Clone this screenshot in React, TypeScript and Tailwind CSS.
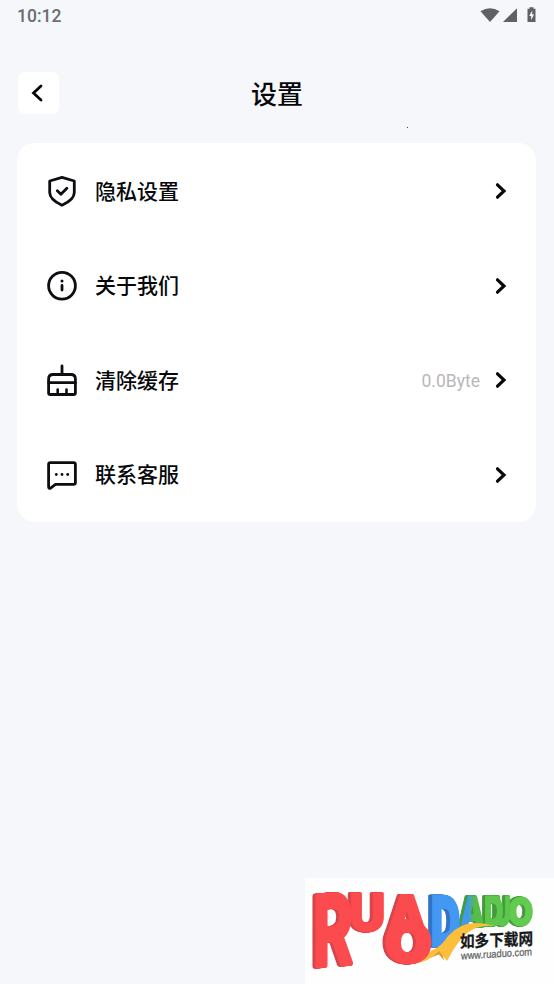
import type { ReactNode } from "react";

interface SettingItem {
  label: string;
  icon: ReactNode;
  value?: string;
}

function ShieldIcon() {
  return (
    <svg className="h-8 w-8" viewBox="0 0 32 32" fill="none" stroke="#0c0e11" strokeWidth={2.8} strokeLinecap="round" strokeLinejoin="round">
      <path d="M16 2.400 28.300 6v11.500c0 5.500-5.400 9.600-12.300 12.800C9.100 27.100 3.700 23 3.700 17.500V6Z" />
      <path d="m11.300 15.800 3.600 3.500 6-6.100" />
    </svg>
  );
}

function InfoIcon() {
  return (
    <svg className="h-8 w-8" viewBox="0 0 32 32" fill="none" stroke="#0c0e11" strokeWidth={2.8} strokeLinecap="round">
      <circle cx="16" cy="15.700" r="13.400" />
      <path d="M16 15.500v4.600" />
      <circle cx="16" cy="11" r="1.500" fill="#0c0e11" stroke="none" />
    </svg>
  );
}

function BroomIcon() {
  return (
    <svg className="h-8 w-8" viewBox="0 0 32 32" fill="none" stroke="#0c0e11" strokeWidth={2.8} strokeLinecap="round" strokeLinejoin="round">
      <path d="M16 2v8" />
      <path d="M2.600 28.700V15q0-4.500 4.500-4.500h17.800q4.500 0 4.500 4.500v13.700q0 1.800-1.800 1.800H4.400q-1.800 0-1.800-1.800Z" />
      <path d="M2.600 18.700h26.800" />
      <path d="M11.700 25.500V30M20.500 25.500V30" strokeWidth={2.600} />
    </svg>
  );
}

function ChatIcon() {
  return (
    <svg className="mt-px h-8 w-8" viewBox="0 0 32 32" fill="none" stroke="#0c0e11" strokeWidth={2.800} strokeLinejoin="round">
      <path d="M4.400 3.600h23.200q1.800 0 1.800 1.800v18.200q0 1.800-1.800 1.800H9.500l-4.600 3.500q-2.300 1.200-2.300-1.200V5.400q0-1.800 1.800-1.800Z" />
      <g fill="#0c0e11" stroke="none">
        <circle cx="10.300" cy="15.500" r="1.400" />
        <circle cx="16" cy="15.500" r="1.400" />
        <circle cx="21.700" cy="15.500" r="1.400" />
      </g>
    </svg>
  );
}

const items: SettingItem[] = [
  { label: "隐私设置", icon: <ShieldIcon /> },
  { label: "关于我们", icon: <InfoIcon /> },
  { label: "清除缓存", icon: <BroomIcon />, value: "0.0Byte" },
  { label: "联系客服", icon: <ChatIcon /> },
];

function StatusBar() {
  return (
    <div className="flex h-8 items-center justify-between pr-[17px] pl-[17px] text-[#6b6d71]">
      <span className="font-[Roboto,sans-serif] text-[17.500px] leading-8 font-medium">10:12</span>
      <svg className="mb-px h-5 w-[57px]" viewBox="0 0 57 20" fill="#5f6165">
        <path d="M.500 5.300Q10 -1 19.500 5.300L10 16Z" />
        <path d="M37 2.200V16H23Z" />
        <path d="M49.500 1.200h4v1.500h2V16h-8V2.700h2Z" />
        <path d="m52.200 4.500-3 5.500h1.900v4l3-5.500h-1.900Z" fill="#f5f6fa" />
      </svg>
    </div>
  );
}

// Left bearing and ink width of the heavy capitals, in em
const METRICS: Record<string, [number, number]> = {
  R: [0.05, 0.61],
  U: [0.05, 0.65],
  A: [0.01, 0.78],
  D: [0.05, 0.64],
  O: [0.04, 0.71],
};
const CAP_HEIGHT = 0.727;

interface LetterProps {
  char: string;
  x: number;
  y: number;
  w: number;
  h: number;
  stroke: number;
  fill: string;
  skew?: number;
  weight?: number;
}

function Letter({ char, x, y, w, h, stroke, fill, skew = 0, weight = 900 }: LetterProps) {
  const [bearing, width] = METRICS[char];
  const sx = (w - stroke) / width / 100;
  const sy = (h - stroke) / CAP_HEIGHT / 100;
  const left = x + stroke / 2 - bearing * sx * 100;
  return (
    <text
      transform={`matrix(${sx} ${skew} 0 ${sy} ${left} ${y + h - stroke / 2})`}
      fill={fill}
      stroke={fill}
      strokeWidth={stroke}
      strokeLinejoin="round"
      fontWeight={weight}
      vectorEffect="non-scaling-stroke"
    >
      {char}
    </text>
  );
}

const RED_SIDE =
  "[filter:drop-shadow(-1px_0_0_#d8454b)_drop-shadow(-1px_0_0_#d8454b)_drop-shadow(-1px_0.5px_0_#d04248)]";
const BLUE_SIDE =
  "[filter:drop-shadow(-1px_0_0_#3273c8)_drop-shadow(-1px_0_0_#3273c8)_drop-shadow(-2px_0.5px_0_#3273c8)]";
const GREEN_SIDE =
  "[filter:drop-shadow(-1px_0_0_#429b3c)_drop-shadow(-1px_0_0_#429b3c)_drop-shadow(-1px_0.5px_0_#429b3c)]";

function Logo() {
  return (
    <svg className="h-[106px] w-[249px]" viewBox="0 0 249 106">
      <defs>
        <linearGradient id="blueGreen">
          <stop offset="0.3" stopColor="#4298ed" />
          <stop offset="0.6" stopColor="#55bd48" />
        </linearGradient>
      </defs>
      <rect width="249" height="106" fill="#fefefe" />
      <g fontFamily="Inter, sans-serif" fontSize={100}>
        <g className={GREEN_SIDE}>
          <Letter char="O" x={204} y={18} w={24} h={30} stroke={1} fill="#62cb50" />
        </g>
        <g className={GREEN_SIDE}>
          <Letter char="U" x={190} y={17} w={16} h={31} stroke={1} fill="#5dc64c" />
        </g>
        <g className={GREEN_SIDE}>
          <Letter char="D" x={180} y={17} w={18} h={31} stroke={1} fill="#5dc64c" />
        </g>
        <g className={GREEN_SIDE}>
          <Letter char="A" x={155} y={17} w={25} h={32} stroke={1} fill="url(#blueGreen)" />
        </g>
        <g className={BLUE_SIDE}>
          <Letter char="D" x={127} y={16.5} w={28} h={52} stroke={2} fill="#4298f3" />
        </g>
      </g>
      <path d="m126 73 10-4 3 13.500-5-6-8 3Z" fill="#dc9d2c" />
      <path d="M98 85.500Q116 83 127 72.500 136 69 143 58q12-13 27-13 10 0 20 3-18-2-29 8-9 8-19 27l-8-10Q120 88 98 85.500Z" fill="#fbbf3c" />
      <g fontFamily="Inter, sans-serif" fontSize={100}>
        <g className={RED_SIDE}>
          <Letter char="U" x={46} y={14.500} w={34} h={39} stroke={1} fill="#fb4b4e" />
        </g>
        <g className={RED_SIDE}>
          <Letter char="R" x={9} y={16.500} w={41} h={74} stroke={4} skew={-0.050} weight={700} fill="#fb4b4e" />
        </g>
        <g className={RED_SIDE}>
          <Letter char="A" x={80.500} y={15.500} w={46} h={45} stroke={4} weight={700} fill="#fb4b4e" />
          <Letter char="O" x={81} y={43} w={46} h={42} stroke={3} fill="#fb4b4e" />
        </g>
      </g>
      <text transform="matrix(1 -.04 0 1 155 69.500)" fill="#171819" stroke="#171819" strokeWidth={0.300} fontFamily="'Noto Sans CJK SC', sans-serif" fontWeight={700} fontSize={16.500} textLength={73} lengthAdjust="spacingAndGlyphs">
        如多下载网
      </text>
      <text transform="matrix(1 -.06 0 1 156 81.500)" fill="#66686a" fontFamily="'Liberation Sans', sans-serif" fontSize={10.500} stroke="#66686a" strokeWidth={0.300} textLength={71} lengthAdjust="spacingAndGlyphs">
        www.ruaduo.com
      </text>
    </svg>
  );
}

export default function App() {
  return (
    <div className="flex h-[984px] w-[554px] flex-col overflow-hidden bg-[#f5f7fb] font-['Noto_Sans_CJK_SC',sans-serif] text-[#07080a]">
      <StatusBar />
      <header className="relative mt-10 flex h-[42px] items-center px-[18px]">
        <button className="flex h-[42px] w-[41px] items-center justify-center rounded-[7px] bg-white pr-[3px]" aria-label="返回">
          <svg className="h-[18px] w-3" viewBox="0 0 12 18" fill="none" stroke="currentColor" strokeWidth={2.800} strokeLinecap="round">
            <path d="M10 2 2.500 9l7.500 7" />
          </svg>
        </button>
        <h1 className="flex-1 pr-[41px] text-center text-[26px] leading-[42px] font-medium">设置</h1>
        <span className="absolute top-[55px] left-[407px] h-px w-px bg-[#44474c]" />
      </header>
      <main className="mt-[29px] mr-[18px] ml-[17px] flex h-[379px] flex-col rounded-[18px] bg-white pt-px">
        {items.map((item) => (
          <button key={item.label} className="flex flex-1 items-center pr-[29px] pl-[29px]">
            {item.icon}
            <span className="ml-[17px] pb-[3px] text-[21px] leading-8 font-medium">{item.label}</span>
            {item.value && (
              <span className="ml-auto pt-px font-[Roboto,sans-serif] text-[17.500px] text-[#b8b8b9]">{item.value}</span>
            )}
            <svg className={`h-[18px] w-3 ${item.value ? "ml-[15px]" : "ml-auto"}`} viewBox="0 0 12 18" fill="none" stroke="currentColor" strokeWidth={3.200} strokeLinecap="round">
              <path d="M2.500 2.800 9 9l-6.500 6.200" />
            </svg>
          </button>
        ))}
      </main>
      <footer className="mt-auto flex justify-end">
        <Logo />
      </footer>
    </div>
  );
}
